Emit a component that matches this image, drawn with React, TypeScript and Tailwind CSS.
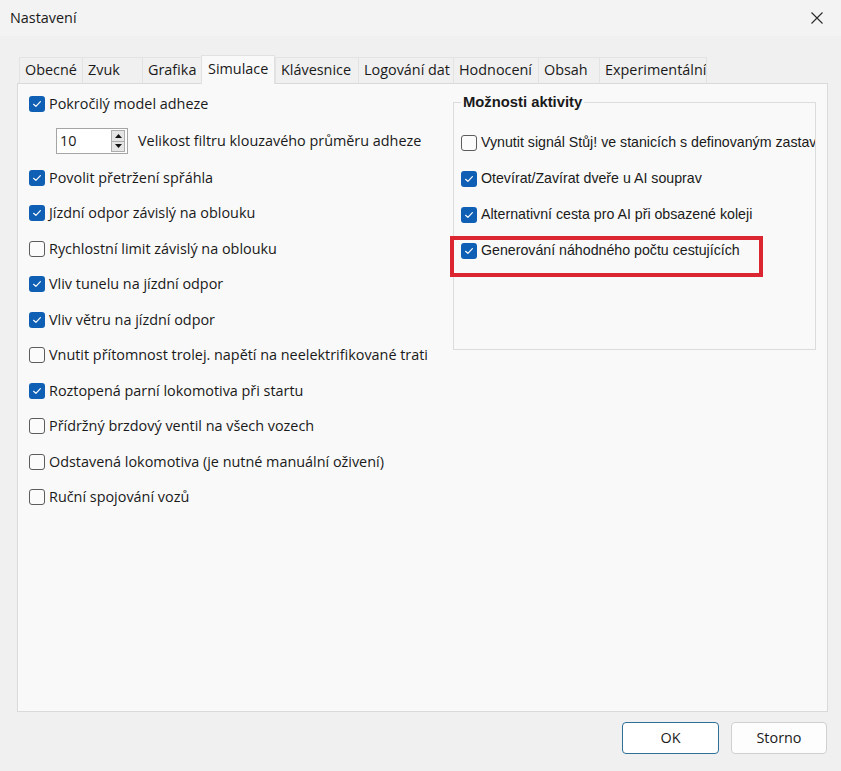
import React from 'react';

const UI_FONT = "font-['Open_Sans','Noto_Sans',sans-serif]";
const ARIAL = "font-['Liberation_Sans',Arial,sans-serif]";

const tabs = [
  { label: 'Obecné', w: 'w-[63px]' },
  { label: 'Zvuk', w: 'w-[60px]' },
  { label: 'Grafika', w: 'w-[59px]' },
  { label: 'Simulace', w: 'w-[74px]', active: true },
  { label: 'Klávesnice', w: 'w-[83px]' },
  { label: 'Logování dat', w: 'w-[95px]' },
  { label: 'Hodnocení', w: 'w-[85px]' },
  { label: 'Obsah', w: 'w-[61px]' },
  { label: 'Experimentální', w: 'w-[108px]', last: true },
];

const leftTop = { label: 'Pokročilý model adheze', checked: true };

const leftRows = [
  { label: 'Povolit přetržení spřáhla', checked: true },
  { label: 'Jízdní odpor závislý na oblouku', checked: true },
  { label: 'Rychlostní limit závislý na oblouku', checked: false },
  { label: 'Vliv tunelu na jízdní odpor', checked: true },
  { label: 'Vliv větru na jízdní odpor', checked: true },
  { label: 'Vnutit přítomnost trolej. napětí na neelektrifikované trati', checked: false },
  { label: 'Roztopená parní lokomotiva při startu', checked: true },
  { label: 'Přídržný brzdový ventil na všech vozech', checked: false },
  { label: 'Odstavená lokomotiva (je nutné manuální oživení)', checked: false },
  { label: 'Ruční spojování vozů', checked: false },
];

const rightRows = [
  { label: 'Vynutit signál Stůj! ve stanicích s definovaným zastav', checked: false },
  { label: 'Otevírat/Zavírat dveře u AI souprav', checked: true },
  { label: 'Alternativní cesta pro AI při obsazené koleji', checked: true },
  { label: 'Generování náhodného počtu cestujících', checked: true },
];

const CheckBox: React.FC<{ checked: boolean }> = ({ checked }) =>
  checked ? (
    <span className="w-[16px] h-[16px] shrink-0 rounded-[3px] bg-[#0f5fb5] flex items-center justify-center">
      <svg width="16" height="16" viewBox="0 0 16 16">
        <path d="M4.6 8.3 L6.9 10.4 L11.4 5.7" fill="none" stroke="#ffffff" strokeWidth="1.2" strokeLinecap="round" strokeLinejoin="round" />
      </svg>
    </span>
  ) : (
    <span className="w-[16px] h-[16px] shrink-0 rounded-[3px] border border-[#5c5c5c] bg-[#fbfbfb]" />
  );

const App: React.FC = () => {
  return (
    <div className={`relative w-[841px] h-[771px] bg-[#f0f0f0] text-[#1a1a1a] flex flex-col overflow-hidden ${UI_FONT}`}>
      {/* title bar */}
      <div className="h-[36px] bg-[#f3f3f3] flex items-center justify-between pl-[10px] pr-[12px]">
        <span className="text-[14.4px]">Nastavení</span>
        <svg width="14" height="14" viewBox="0 0 14 14" className="mr-[5px]">
          <path d="M1.5 1.5 L12.5 12.5 M12.5 1.5 L1.5 12.5" stroke="#2a2a2a" strokeWidth="1.1" />
        </svg>
      </div>

      <div className="pl-[17px] pr-[13px] pt-[19px]">
        {/* tabs */}
        <div className="flex items-end pl-[2px] h-[28px] text-[14.4px]">
          {tabs.map((t) =>
            t.active ? (
              <div
                key={t.label}
                className={`${t.w} h-[29px] -mb-px relative z-10 bg-[#f9f9f9] border border-b-0 border-[#e1e1e1] pl-[6px] pt-[2px] leading-[22px] whitespace-nowrap`}
              >
                {t.label}
              </div>
            ) : (
              <div
                key={t.label}
                className={`${t.w} h-[26px] bg-[#f0f0f0] border-t border-l border-[#e3e3e3] ${t.last ? 'border-r' : ''} pl-[5px] leading-[24px] whitespace-nowrap overflow-hidden`}
              >
                {t.label}
              </div>
            )
          )}
        </div>

        {/* panel */}
        <div className="h-[629px] bg-[#f9f9f9] border border-[#dadada] flex">
          <div className="flex-1 pl-[11px] pt-[2px] text-[14.4px]">
            <div className="h-[36px] flex items-center gap-[4px]">
              <CheckBox checked={leftTop.checked} />
              <span>{leftTop.label}</span>
            </div>
            <div className="h-[38px] flex items-center pl-[27px]">
              <div className="w-[72px] h-[26px] border border-[#a5a5a5] bg-white flex items-center justify-between pl-[3px] pr-[2px]">
                <span>10</span>
                <div className="w-[14px] h-[22px] flex flex-col">
                  <div className="flex-1 bg-[#e5e5e5] border border-[#adadad] flex items-center justify-center">
                    <svg width="7" height="4" viewBox="0 0 7 4"><path d="M3.5 0 L7 4 L0 4 Z" fill="#111" /></svg>
                  </div>
                  <div className="flex-1 bg-[#e5e5e5] border border-t-0 border-[#adadad] flex items-center justify-center">
                    <svg width="7" height="4" viewBox="0 0 7 4"><path d="M0 0 L7 0 L3.5 4 Z" fill="#111" /></svg>
                  </div>
                </div>
              </div>
              <span className="ml-[10px] whitespace-nowrap">Velikost filtru klouzavého průměru adheze</span>
            </div>
            {leftRows.map((r) => (
              <div key={r.label} className="h-[35.5px] flex items-center gap-[4px]">
                <CheckBox checked={r.checked} />
                <span className="whitespace-nowrap">{r.label}</span>
              </div>
            ))}
          </div>

          <fieldset className={`w-[363px] h-[256px] mt-[10px] mr-[11px] border border-[#dcdcdc] pl-[7px] pr-0 min-w-0 ${ARIAL}`}>
            <legend className="px-[2px] text-[14.8px] font-bold leading-[16px]">Možnosti aktivity</legend>
            <div className="pt-[15px] text-[14.2px]">
              {rightRows.map((r) => (
                <div key={r.label} className="h-[36px] flex items-center gap-[4px] overflow-hidden">
                  <CheckBox checked={r.checked} />
                  <span className="whitespace-nowrap">{r.label}</span>
                </div>
              ))}
            </div>
          </fieldset>
        </div>
      </div>

      {/* buttons */}
      <div className="flex justify-end gap-[12px] pr-[14px] pt-[10px] text-[14.4px]">
        <button className="w-[97px] h-[32px] rounded-[4px] border border-[#2f6f98] bg-white">OK</button>
        <button className="w-[96px] h-[32px] rounded-[4px] border border-[#d0d0d0] bg-[#fdfdfd]">Storno</button>
      </div>

      {/* red annotation */}
      <div className="absolute left-[450px] top-[236px] w-[313px] h-[41px] border-[4px] border-[#db2531]" />
    </div>
  );
};

export default App;
